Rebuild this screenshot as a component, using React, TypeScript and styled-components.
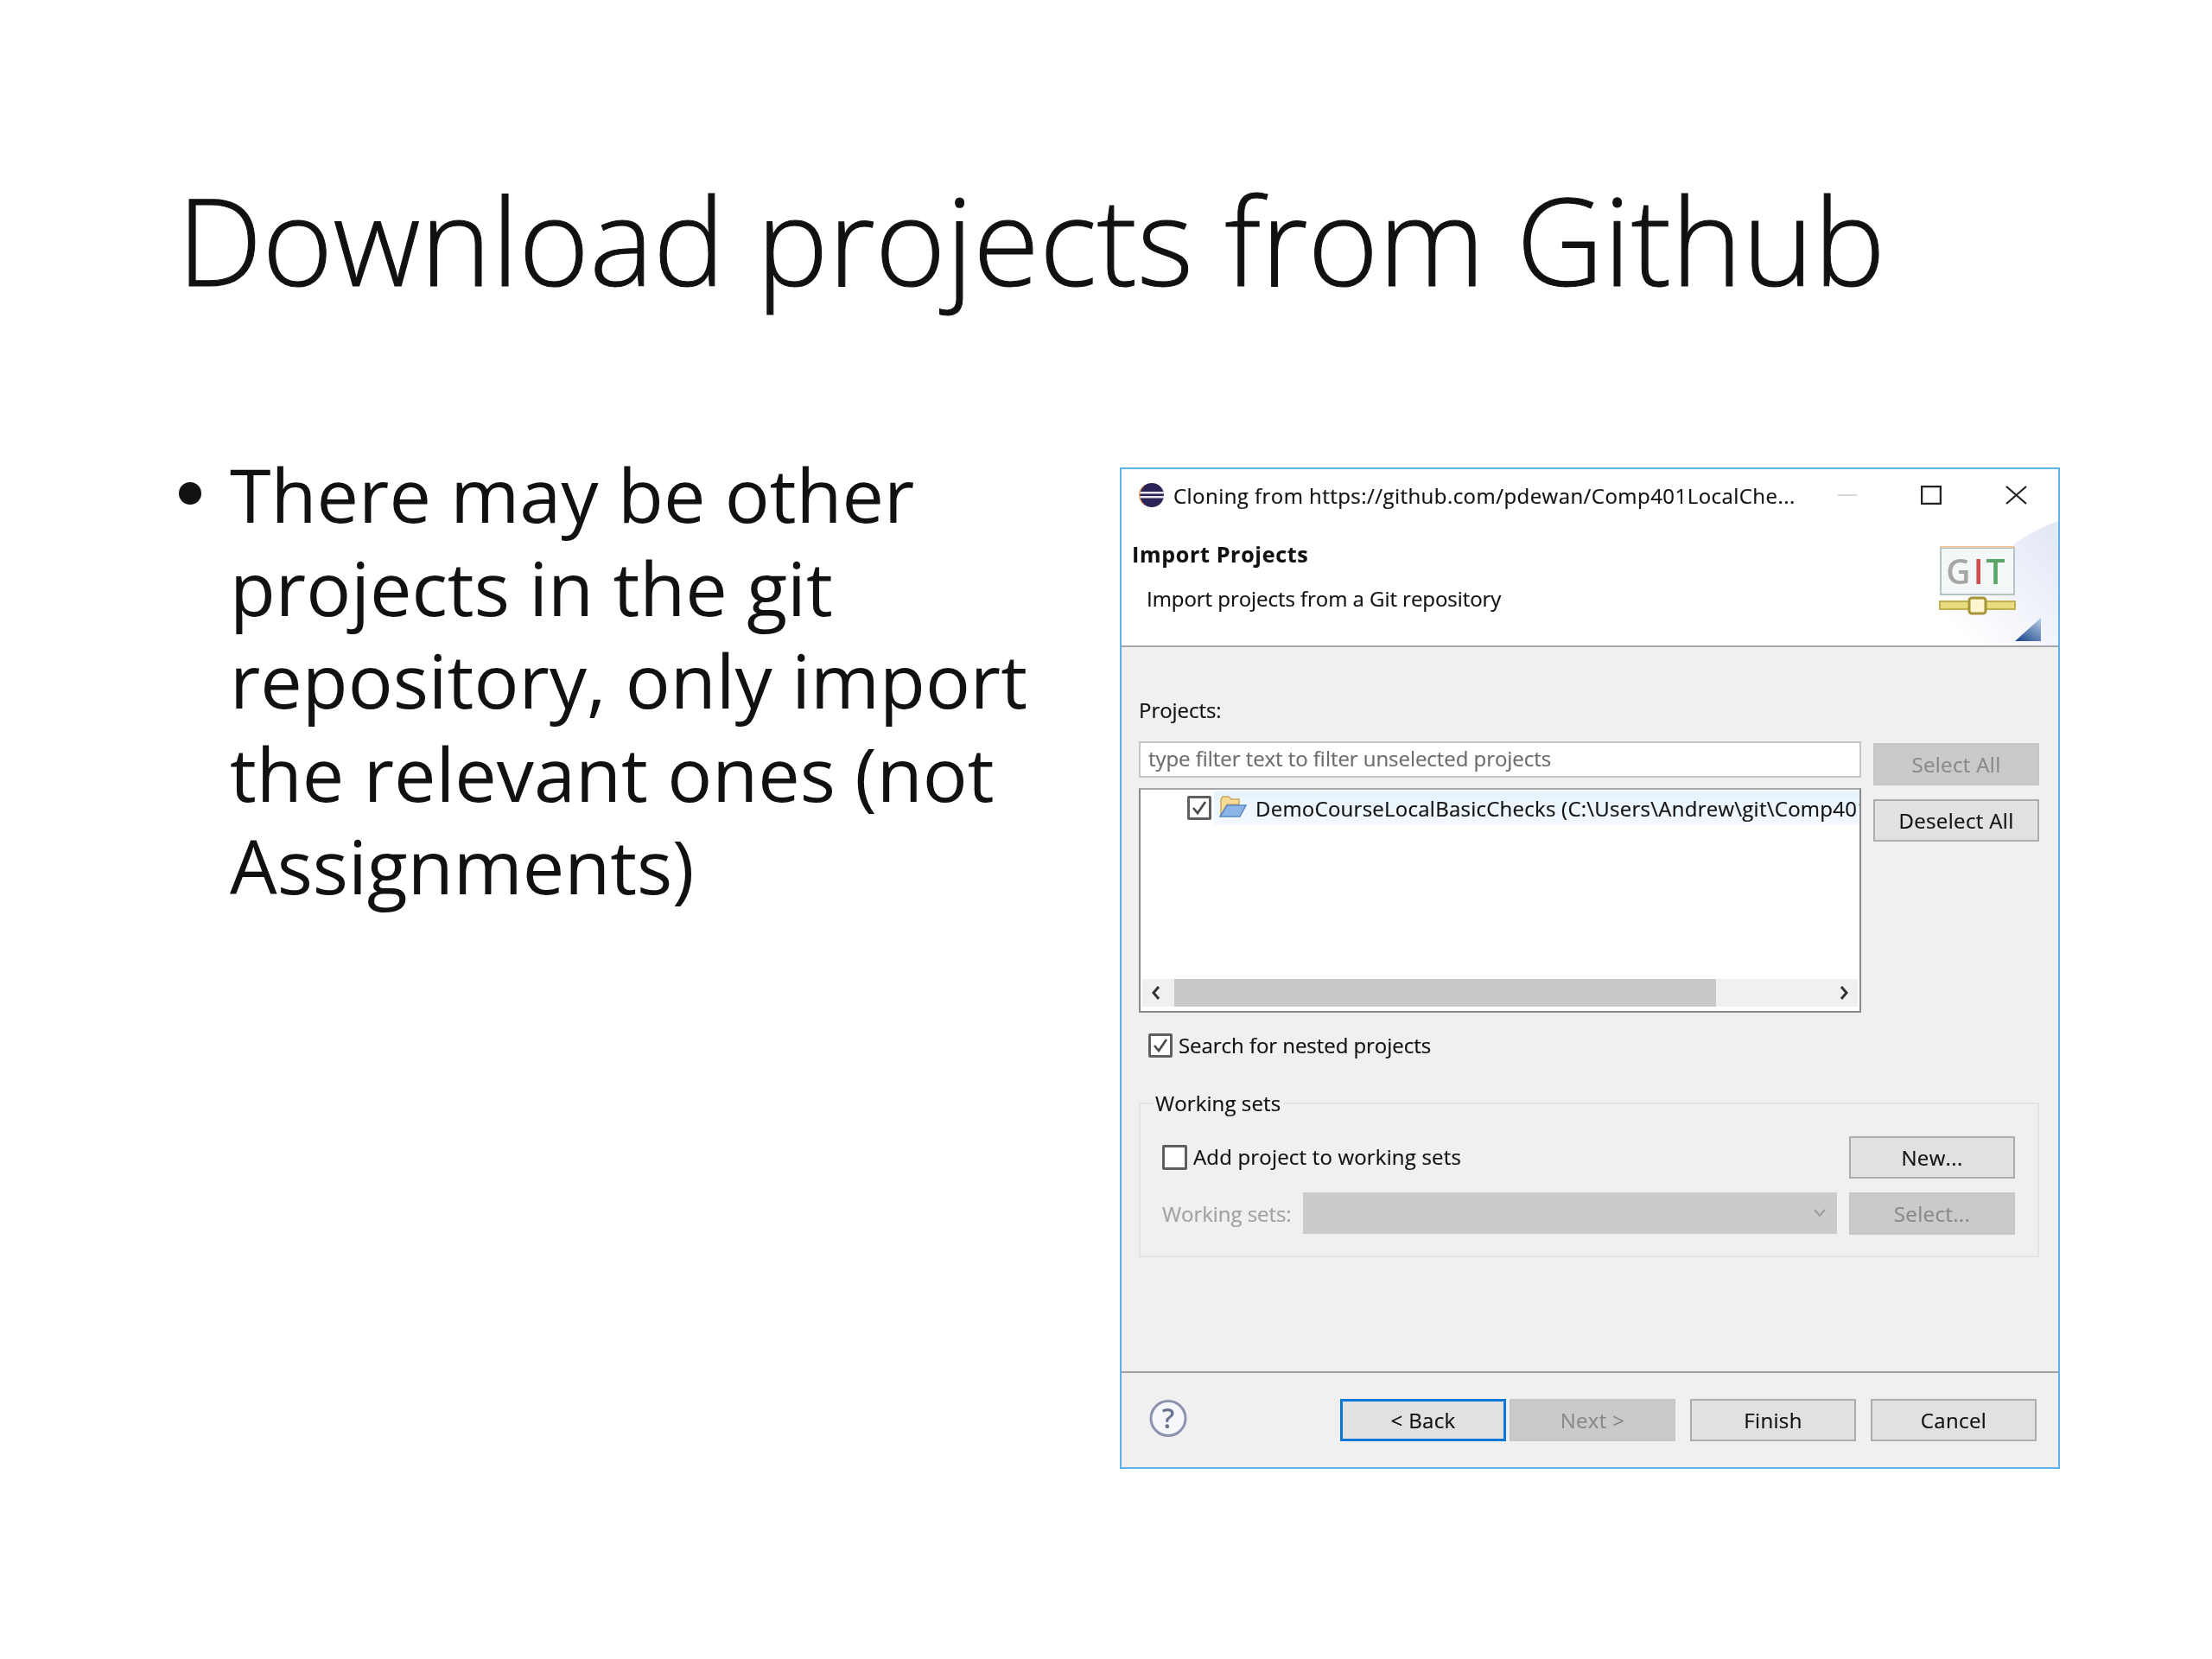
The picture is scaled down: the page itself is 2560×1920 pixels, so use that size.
import React from 'react';
import styled, { createGlobalStyle } from 'styled-components';

const GlobalStyle = createGlobalStyle`
  html, body {
    margin: 0;
    padding: 0;
    background: #fff;
  }
`;

const Slide = styled.div`
  width: 2560px;
  height: 1920px;
  box-sizing: border-box;
  padding: 185px 176px 0 205px;
  background: #fff;
  overflow: hidden;
  font-family: "Open Sans", sans-serif;
`;

const Title = styled.h1`
  margin: 0;
  height: 356px;
  font-size: 139.6px;
  line-height: 184px;
  font-weight: 300;
  -webkit-text-stroke: 1px #111;
  color: #111;
  white-space: nowrap;
`;

const Columns = styled.div`
  display: flex;
  justify-content: space-between;
`;

const BulletList = styled.ul`
  margin: -23px 0 0;
  padding: 0 0 0 61px;
  width: 1000px;
  list-style: none;
  position: relative;
  font-size: 86.4px;
  line-height: 107.6px;
  color: #111;
  &::before {
    content: '';
    position: absolute;
    left: 2px;
    top: 40px;
    width: 26px;
    height: 26px;
    border-radius: 50%;
    background: #111;
  }
`;

const Dialog = styled.div`
  width: 1088px;
  height: 1159px;
  flex-shrink: 0;
  box-sizing: border-box;
  border: 2px solid #5cb4ea;
  display: flex;
  flex-direction: column;
  background: #f0f0f0;
  font-size: 24px;
  letter-spacing: -0.05px;
  color: #111;
  -webkit-text-stroke: 0.2px currentColor;
  filter: blur(0.5px);
`;

const TopArea = styled.div`
  position: relative;
  height: 204px;
  background: #fff;
  border-bottom: 2px solid #a6a6a6;
  flex-shrink: 0;
`;

const TitleBar = styled.div`
  position: relative;
  z-index: 1;
  height: 60px;
  display: flex;
  align-items: center;
  padding: 0 36px 0 20px;
`;

const WindowTitle = styled.span`
  flex: 1;
  margin-left: 10px;
  letter-spacing: 0.45px;
  white-space: nowrap;
`;

const WindowControls = styled.div`
  display: flex;
  align-items: center;
  gap: 74px;
`;

const HeaderTitle = styled.div`
  position: relative;
  z-index: 1;
  margin: 22px 0 0 12px;
  font-weight: 700;
  line-height: 32px;
  font-size: 25px;
  letter-spacing: 0.7px;
`;

const HeaderText = styled.div`
  position: relative;
  z-index: 1;
  margin: 20px 0 0 29px;
  line-height: 32px;
`;

const Banner = styled.svg`
  position: absolute;
  right: 0;
  bottom: 0;
`;

const Content = styled.div`
  flex: 1;
  padding: 57px 21px 0 20px;
`;

const FieldLabel = styled.div`
  line-height: 32px;
  margin-bottom: 20px;
`;

const ProjectGrid = styled.div`
  display: grid;
  grid-template-columns: 836px 192px;
  column-gap: 14px;
`;

const ListColumn = styled.div`
  display: flex;
  flex-direction: column;
  gap: 12px;
`;

const ButtonColumn = styled.div`
  display: flex;
  flex-direction: column;
  gap: 16px;
  padding-top: 2px;
`;

const FilterBox = styled.div`
  height: 42px;
  box-sizing: border-box;
  border: 2px solid #c4c4c4;
  background: #fff;
  padding-left: 9px;
  line-height: 36px;
  color: #6d6d6d;
`;

const TreeBox = styled.div`
  height: 260px;
  box-sizing: border-box;
  border: 2px solid #8a8a8a;
  border-top-color: #a8a8a8;
  background: #fff;
  display: flex;
  flex-direction: column;
  justify-content: space-between;
  overflow: hidden;
`;

const TreeRow = styled.div`
  margin-top: 2px;
  height: 38px;
  display: flex;
  align-items: center;
  padding-left: 54px;
  white-space: nowrap;
`;

const TreeSelection = styled.div`
  flex: 1;
  min-width: 0;
  height: 38px;
  margin-left: 3px;
  display: flex;
  align-items: center;
  gap: 10px;
  padding-left: 5px;
  letter-spacing: 0.25px;
  background: linear-gradient(#e6f3fc, #f3f9fe);
  overflow: hidden;
`;

const ScrollBar = styled.div`
  height: 32px;
  margin: 0 2px 5px;
  background: #f0f0f0;
  display: flex;
  align-items: center;
  justify-content: space-between;
  padding: 0 10px;
  position: relative;
`;

const ScrollThumb = styled.div`
  position: absolute;
  left: 37px;
  top: 0;
  width: 627px;
  height: 32px;
  background: #c9c9c9;
`;

const CheckRow = styled.div<{ $indent: number }>`
  display: flex;
  align-items: center;
  gap: 7px;
  margin-left: ${p => p.$indent}px;
  line-height: 30px;
  white-space: nowrap;
`;

const SearchRow = styled(CheckRow)`
  margin-top: 23px;
`;

const AddRow = styled(CheckRow)`
  letter-spacing: 0.18px;
`;

const CheckBox = styled.span<{ $size: number }>`
  width: ${p => p.$size}px;
  height: ${p => p.$size}px;
  flex-shrink: 0;
  box-sizing: border-box;
  border: 3px solid #5f5f5f;
  border-radius: 2px;
  background: #fff;
  display: flex;
  align-items: center;
  justify-content: center;
`;

const GroupBox = styled.fieldset`
  margin: 37px 1px 0 0;
  height: 193px;
  box-sizing: border-box;
  border: 2px solid #e3e3e3;
  padding: 22px 26px 0 25px;
  min-width: 0;
`;

const GroupLegend = styled.legend`
  margin-left: -10px;
  padding: 0 4px 0 2px;
  line-height: 30px;
  letter-spacing: 0.1px;
`;

const GroupRow = styled.div`
  display: flex;
  align-items: center;
  justify-content: space-between;
  height: 50px;
  margin-bottom: 15px;
`;

const DisabledLabel = styled.span`
  width: 163px;
  flex-shrink: 0;
  color: #a2a2a2;
  white-space: nowrap;
`;

const ComboBox = styled.div`
  flex: 1;
  height: 48px;
  margin-right: 14px;
  background: #cbcbcb;
  display: flex;
  align-items: center;
  justify-content: flex-end;
  padding-right: 12px;
`;

const Footer = styled.div`
  height: 111px;
  flex-shrink: 0;
  box-sizing: border-box;
  border-top: 2px solid #a0a0a0;
  display: flex;
  align-items: flex-start;
  padding: 30px 25px 0 32px;
`;

const HelpIcon = styled.svg`
  flex-shrink: 0;
  margin-right: 177px;
`;

const FooterButtons = styled.div`
  flex: 1;
  display: flex;
  justify-content: flex-end;
  gap: 17px;
`;

const BackNext = styled.div`
  display: flex;
  gap: 4px;
`;

const DialogButton = styled.div<{ $kind?: 'disabled' | 'focus' }>`
  width: 192px;
  height: 49px;
  box-sizing: border-box;
  display: flex;
  align-items: center;
  justify-content: center;
  flex-shrink: 0;
  letter-spacing: 0.35px;
  background: ${p => (p.$kind === 'disabled' ? '#cacaca' : '#e1e1e1')};
  border: ${p =>
    p.$kind === 'focus'
      ? '3px solid #0a78d4'
      : p.$kind === 'disabled'
        ? '2px solid #c6c6c6'
        : '2px solid #adadad'};
  color: ${p => (p.$kind === 'disabled' ? '#8a8a8a' : '#111')};
`;

const CheckMark = ({ size }: { size: number }) => (
  <svg width={size} height={size} viewBox="0 0 20 20">
    <path d="M3 10l5 6L17 3" fill="none" stroke="#4a4a4a" strokeWidth="2.6" />
  </svg>
);

const EclipseIcon = () => (
  <svg width="30" height="30" viewBox="0 0 30 30">
    <circle cx="15" cy="15" r="14" fill="#2c2255" />
    <rect x="1" y="11" width="28" height="2.5" fill="#e8e4f0" />
    <rect x="1" y="16" width="28" height="2.5" fill="#e8e4f0" />
    <path d="M6 4 A14 14 0 0 0 6 26" fill="none" stroke="#e0a060" strokeWidth="1.2" />
  </svg>
);

const FolderIcon = () => (
  <svg width="33" height="30" viewBox="0 0 33 30" style={{ flexShrink: 0 }}>
    <path d="M3 24V5l2-3h7l3 3h9v6H10z" fill="#f7dc96" stroke="#c9a860" strokeWidth="1.5" />
    <path d="M2 25L10 12h22l-7 13z" fill="#8cb4e6" stroke="#5a86c4" strokeWidth="1.5" />
  </svg>
);

const GitBanner = () => (
  <Banner width="156" height="144" viewBox="0 0 156 144">
    <defs>
      <linearGradient id="wash" x1="0" y1="1" x2="1" y2="0.2">
        <stop offset="0.2" stopColor="#fff" />
        <stop offset="1" stopColor="#e4e9f6" />
      </linearGradient>
      <linearGradient id="corner" x1="0.2" y1="1" x2="1" y2="0">
        <stop offset="0" stopColor="#23508f" />
        <stop offset="1" stopColor="#b9cce6" />
      </linearGradient>
    </defs>
    <path d="M0 144 C50 100 70 30 156 0 V144z" fill="url(#wash)" />
    <rect x="20" y="31" width="85" height="54" fill="#f4f7f8" stroke="#b4c4c4" strokeWidth="2" />
    <path d="M19 30h87" stroke="#e8c8a0" strokeWidth="2" />
    <text x="62" y="73" textAnchor="middle" fontFamily="Open Sans, sans-serif" fontSize="39" fontWeight="600" letterSpacing="3">
      <tspan fill="#a6a6a6">G</tspan>
      <tspan fill="#d0504f">I</tspan>
      <tspan fill="#5aa468">T</tspan>
    </text>
    <rect x="19" y="93" width="87" height="9" fill="#e8dc80" stroke="#c0b050" strokeWidth="2" />
    <rect x="53" y="89" width="19" height="18" rx="3" fill="#fdf4d0" stroke="#a89438" strokeWidth="3" />
    <path d="M106 139L136 112v27z" fill="url(#corner)" />
  </Banner>
);

const App = () => (
  <Slide>
    <GlobalStyle />
    <Title>Download projects from Github</Title>
    <Columns>
      <BulletList>
        <li>There may be other projects in the git repository, only import the relevant ones (not Assignments)</li>
      </BulletList>
      <Dialog>
        <TopArea>
          <GitBanner />
          <TitleBar>
            <EclipseIcon />
            <WindowTitle>Cloning from https://github.com/pdewan/Comp401LocalChe...</WindowTitle>
            <WindowControls>
              <svg width="22" height="22" viewBox="0 0 22 22">
                <path d="M0 11h22" stroke="#d8d8d8" strokeWidth="2" />
              </svg>
              <svg width="24" height="22" viewBox="0 0 24 22">
                <rect x="1" y="1" width="22" height="20" fill="none" stroke="#222" strokeWidth="2.5" />
              </svg>
              <svg width="25" height="22" viewBox="0 0 25 22">
                <path d="M1 1l23 20M24 1L1 21" stroke="#222" strokeWidth="2.2" fill="none" />
              </svg>
            </WindowControls>
          </TitleBar>
          <HeaderTitle>Import Projects</HeaderTitle>
          <HeaderText>Import projects from a Git repository</HeaderText>
        </TopArea>
        <Content>
          <FieldLabel>Projects:</FieldLabel>
          <ProjectGrid>
            <ListColumn>
              <FilterBox>type filter text to filter unselected projects</FilterBox>
              <TreeBox>
                <TreeRow>
                  <CheckBox $size={28}>
                    <CheckMark size={20} />
                  </CheckBox>
                  <TreeSelection>
                    <FolderIcon />
                    <span>DemoCourseLocalBasicChecks (C:\Users\Andrew\git\Comp401LocalChecks)</span>
                  </TreeSelection>
                </TreeRow>
                <ScrollBar>
                  <ScrollThumb />
                  <svg width="12" height="18" viewBox="0 0 12 18">
                    <path d="M9 2L3 9l6 7" fill="none" stroke="#333" strokeWidth="3" />
                  </svg>
                  <svg width="12" height="18" viewBox="0 0 12 18">
                    <path d="M3 2l6 7-6 7" fill="none" stroke="#333" strokeWidth="3" />
                  </svg>
                </ScrollBar>
              </TreeBox>
            </ListColumn>
            <ButtonColumn>
              <DialogButton $kind="disabled">Select All</DialogButton>
              <DialogButton>Deselect All</DialogButton>
            </ButtonColumn>
          </ProjectGrid>
          <SearchRow $indent={11}>
            <CheckBox $size={28}>
              <CheckMark size={20} />
            </CheckBox>
            Search for nested projects
          </SearchRow>
          <GroupBox>
            <GroupLegend>Working sets</GroupLegend>
            <GroupRow>
              <AddRow $indent={0}>
                <CheckBox $size={29} />
                Add project to working sets
              </AddRow>
              <DialogButton>New...</DialogButton>
            </GroupRow>
            <GroupRow>
              <DisabledLabel>Working sets:</DisabledLabel>
              <ComboBox>
                <svg width="16" height="10" viewBox="0 0 16 10">
                  <path d="M2 1l6 7 6-7" fill="none" stroke="#9a9a9a" strokeWidth="2" />
                </svg>
              </ComboBox>
              <DialogButton $kind="disabled">Select...</DialogButton>
            </GroupRow>
          </GroupBox>
        </Content>
        <Footer>
          <HelpIcon width="44" height="45" viewBox="0 0 44 45">
            <circle cx="22" cy="22.5" r="20" fill="#f6f7fa" stroke="#8a94ae" strokeWidth="3" />
            <text x="22" y="34" textAnchor="middle" fontFamily="Open Sans, sans-serif" fontSize="32" fontWeight="600" fill="#6a7490">?</text>
          </HelpIcon>
          <FooterButtons>
            <BackNext>
              <DialogButton $kind="focus">&lt; Back</DialogButton>
              <DialogButton $kind="disabled">Next &gt;</DialogButton>
            </BackNext>
            <DialogButton>Finish</DialogButton>
            <DialogButton>Cancel</DialogButton>
          </FooterButtons>
        </Footer>
      </Dialog>
    </Columns>
  </Slide>
);

export default App;
